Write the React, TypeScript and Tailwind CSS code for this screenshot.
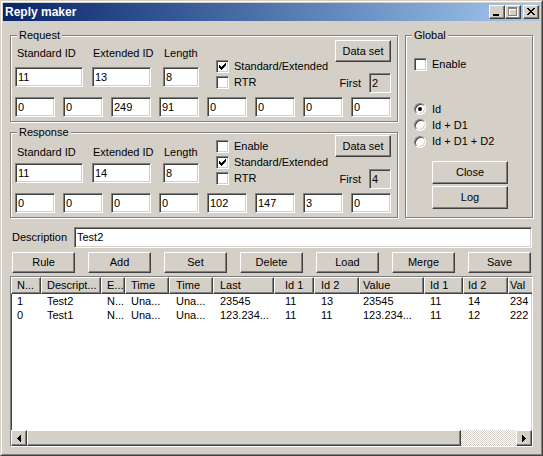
import React from "react";

const SUNKEN =
  "border border-t-[#808080] border-l-[#808080] border-r-white border-b-white shadow-[inset_1px_1px_0_#404040,inset_-1px_-1px_0_#d4d0c8]";
const RAISED =
  "border border-t-white border-l-white border-r-[#404040] border-b-[#404040] shadow-[inset_-1px_-1px_0_#808080]";
const ETCHED = "border border-[#808080] shadow-[inset_1px_1px_0_#ffffff,1px_1px_0_#ffffff]";

function Field({ v, w, h = "h-[20px]", bg = "bg-white" }: { v: string; w: string; h?: string; bg?: string }) {
  return (
    <div className={`${SUNKEN} ${bg} ${w} ${h} flex items-center pl-[2px] shrink-0 overflow-hidden whitespace-nowrap`}>
      {v}
    </div>
  );
}

function Btn({ children, cls }: { children: React.ReactNode; cls: string }) {
  return (
    <div className={`${RAISED} bg-[#d4d0c8] ${cls} flex items-center justify-center shrink-0 whitespace-nowrap`}>
      {children}
    </div>
  );
}

function CheckMark() {
  return (
    <svg width="7" height="7" viewBox="0 0 7 7" shapeRendering="crispEdges" fill="#000">
      <rect x="6" y="0" width="1" height="1" />
      <rect x="5" y="1" width="2" height="1" />
      <rect x="0" y="2" width="1" height="1" />
      <rect x="4" y="2" width="3" height="1" />
      <rect x="0" y="3" width="2" height="1" />
      <rect x="3" y="3" width="3" height="1" />
      <rect x="0" y="4" width="5" height="1" />
      <rect x="1" y="5" width="3" height="1" />
      <rect x="2" y="6" width="1" height="1" />
    </svg>
  );
}

function Check({ label, checked }: { label: string; checked?: boolean }) {
  return (
    <div className="flex items-center h-[13px]">
      <div className={`${SUNKEN} bg-white w-[13px] h-[13px] shrink-0 flex items-center justify-center`}>
        {checked && <CheckMark />}
      </div>
      <span className="ml-[5px] whitespace-nowrap">{label}</span>
    </div>
  );
}

function Radio({ label, on, h }: { label: string; on?: boolean; h: string }) {
  return (
    <div className={`flex items-center ${h}`}>
      <div className="w-[12px] h-[12px] rounded-full border border-t-[#808080] border-l-[#808080] border-r-white border-b-white shadow-[inset_1px_1px_0_#404040,inset_-1px_-1px_0_#d4d0c8] bg-white flex items-center justify-center shrink-0">
        {on && <div className="w-[4px] h-[4px] rounded-full bg-black" />}
      </div>
      <span className="ml-[6px] whitespace-nowrap">{label}</span>
    </div>
  );
}

function Group({ title, cls, children }: { title: string; cls: string; children: React.ReactNode }) {
  return (
    <div className={`relative ${ETCHED} ${cls}`}>
      <span className="absolute -top-[7px] left-[6px] px-[2px] bg-[#d4d0c8] leading-[13px] whitespace-nowrap">
        {title}
      </span>
      {children}
    </div>
  );
}

type SecProps = {
  title: string;
  h: string;
  pt: string;
  lblMt: string;
  lblMb: string;
  chkPt: string;
  firstMt: string;
  rowH: string;
  std: string;
  ext: string;
  len: string;
  checks: { label: string; checked?: boolean }[];
  first: string;
  data: string[];
};

function Section(p: SecProps) {
  const lbl = `${p.lblMt} ${p.lblMb} h-[13px] leading-[13px] whitespace-nowrap`;
  return (
    <Group title={p.title} cls={`w-[388px] ${p.h} pl-[4px] pr-[6px] ${p.pt}`}>
      <div className={`flex ${p.rowH}`}>
        <div className="w-[68px] flex flex-col shrink-0">
          <div className={`${lbl} pl-[2px]`}>Standard ID</div>
          <Field v={p.std} w="w-[68px]" />
        </div>
        <div className="ml-[9px] w-[59px] flex flex-col shrink-0">
          <div className={`${lbl} pl-[1px]`}>Extended ID</div>
          <Field v={p.ext} w="w-[59px]" />
        </div>
        <div className="ml-[12px] w-[36px] flex flex-col shrink-0">
          <div className={`${lbl} pl-[1px]`}>Length</div>
          <Field v={p.len} w="w-[36px]" />
        </div>
        <div className={`ml-[17px] flex-1 flex flex-col gap-[3px] ${p.chkPt}`}>
          {p.checks.map((c, i) => (
            <Check key={i} label={c.label} checked={c.checked} />
          ))}
        </div>
        <div className="w-[56px] flex flex-col items-end shrink-0">
          <Btn cls="w-[56px] h-[22px]">Data set</Btn>
          <div className={`${p.firstMt} flex items-center`}>
            <span className="mr-[8px]">First</span>
            <Field v={p.first} w="w-[22px]" bg="bg-[#d4d0c8]" />
          </div>
        </div>
      </div>
      <div className="flex gap-[8px]">
        {p.data.map((d, i) => (
          <Field key={i} v={d} w="w-[40px]" />
        ))}
      </div>
    </Group>
  );
}

const cols = [
  { w: "w-[30px]", pl: "pl-[5px]", h: "N..." },
  { w: "w-[60px]", pl: "pl-[5px]", h: "Descript..." },
  { w: "w-[24px]", pl: "pl-[5px]", h: "E..." },
  { w: "w-[44px]", pl: "pl-[5px]", h: "Time" },
  { w: "w-[44px]", pl: "pl-[6px]", h: "Time" },
  { w: "w-[61px]", pl: "pl-[6px]", h: "Last" },
  { w: "w-[40px]", pl: "pl-[10px]", h: "Id 1" },
  { w: "w-[45px]", pl: "pl-[6px]", h: "Id 2" },
  { w: "w-[65px]", pl: "pl-[3px]", h: "Value" },
  { w: "w-[39px]", pl: "pl-[5px]", h: "Id 1" },
  { w: "w-[45px]", pl: "pl-[4px]", h: "Id 2" },
  { w: "w-[60px]", pl: "pl-[1px]", h: "Val" },
];

const rows = [
  ["1", "Test2", "N...", "Una...", "Una...", "23545", "11", "13", "23545", "11", "14", "234"],
  ["0", "Test1", "N...", "Una...", "Una...", "123.234...", "11", "11", "123.234...", "11", "12", "222"],
];

function Arrow({ dir }: { dir: "l" | "r" }) {
  return (
    <div className={`${RAISED} bg-[#d4d0c8] w-[16px] h-[16px] flex items-center justify-center shrink-0`}>
      <svg width="4" height="7" viewBox="0 0 4 7" shapeRendering="crispEdges" fill="#000">
        {dir === "l" ? (
          <>
            <rect x="3" y="0" width="1" height="7" />
            <rect x="2" y="1" width="1" height="5" />
            <rect x="1" y="2" width="1" height="3" />
            <rect x="0" y="3" width="1" height="1" />
          </>
        ) : (
          <>
            <rect x="0" y="0" width="1" height="7" />
            <rect x="1" y="1" width="1" height="5" />
            <rect x="2" y="2" width="1" height="3" />
            <rect x="3" y="3" width="1" height="1" />
          </>
        )}
      </svg>
    </div>
  );
}

function CapBtn({ children }: { children: React.ReactNode }) {
  return (
    <div className={`${RAISED} bg-[#d4d0c8] w-[16px] h-[14px] shrink-0 relative`}>
      {children}
    </div>
  );
}

export default function App() {
  return (
    <div className="w-[543px] h-[456px] bg-[#d4d0c8] border border-t-[#d4d0c8] border-l-[#d4d0c8] border-r-[#404040] border-b-[#404040] text-[11px] leading-[13px] text-black font-['Liberation_Sans',Arial,sans-serif] overflow-hidden">
      <div className="w-full h-full border border-t-white border-l-white border-r-[#808080] border-b-[#808080] p-px flex flex-col">
        {/* Title bar */}
        <div className="h-[18px] shrink-0 bg-linear-to-r from-[#0a246a] to-[#a6caf0] flex items-center pl-[2px] pr-[1px]">
          <span className="text-white font-bold text-[12px] leading-[14px]">Reply maker</span>
          <div className="ml-auto flex items-center">
            <CapBtn>
              <svg width="14" height="12" viewBox="0 0 14 12" shapeRendering="crispEdges" className="absolute left-0 top-0">
                <rect x="3" y="8" width="6" height="2" fill="#000" />
              </svg>
            </CapBtn>
            <CapBtn>
              <svg width="14" height="12" viewBox="0 0 14 12" shapeRendering="crispEdges" className="absolute left-0 top-0">
                <g fill="#ffffff" transform="translate(1 1)">
                  <rect x="2" y="1" width="9" height="2" />
                  <rect x="2" y="1" width="1" height="9" />
                  <rect x="10" y="1" width="1" height="9" />
                  <rect x="2" y="9" width="9" height="1" />
                </g>
                <g fill="#808080">
                  <rect x="2" y="1" width="9" height="2" />
                  <rect x="2" y="1" width="1" height="9" />
                  <rect x="10" y="1" width="1" height="9" />
                  <rect x="2" y="9" width="9" height="1" />
                </g>
              </svg>
            </CapBtn>
            <div className="w-[2px]" />
            <CapBtn>
              <svg width="14" height="12" viewBox="0 0 14 12" shapeRendering="crispEdges" className="absolute left-0 top-0" fill="#000">
                <rect x="3" y="2" width="2" height="1" />
                <rect x="9" y="2" width="2" height="1" />
                <rect x="4" y="3" width="2" height="1" />
                <rect x="8" y="3" width="2" height="1" />
                <rect x="5" y="4" width="4" height="1" />
                <rect x="6" y="5" width="2" height="1" />
                <rect x="5" y="6" width="4" height="1" />
                <rect x="4" y="7" width="2" height="1" />
                <rect x="8" y="7" width="2" height="1" />
                <rect x="3" y="8" width="2" height="1" />
                <rect x="9" y="8" width="2" height="1" />
              </svg>
            </CapBtn>
          </div>
        </div>

        {/* Body */}
        <div className="flex-1 flex flex-col pl-[7px] pr-[7px] pt-[14px]">
          <div className="flex gap-[7px]">
            <div className="flex flex-col w-[388px]">
              <Section
                title="Request"
                h="h-[87px]"
                pt="pt-[4px]"
                lblMt="mt-[7px]"
                lblMb="mb-[7px]"
                chkPt="pt-[20px]"
                firstMt="mt-[11px]"
                rowH="h-[57px]"
                std="11"
                ext="13"
                len="8"
                checks={[
                  { label: "Standard/Extended", checked: true },
                  { label: "RTR" },
                ]}
                first="2"
                data={["0", "0", "249", "91", "0", "0", "0", "0"]}
              />
              <div className="h-[10px]" />
              <Section
                title="Response"
                h="h-[86px]"
                pt="pt-[2px]"
                lblMt="mt-[11px]"
                lblMb="mb-[4px]"
                chkPt="pt-[5px]"
                firstMt="mt-[12px]"
                rowH="h-[58px]"
                std="11"
                ext="14"
                len="8"
                checks={[
                  { label: "Enable" },
                  { label: "Standard/Extended", checked: true },
                  { label: "RTR" },
                ]}
                first="4"
                data={["0", "0", "0", "0", "102", "147", "3", "0"]}
              />
            </div>
            <Group title="Global" cls="w-[128px] h-[183px] pl-[8px] pt-[22px] flex flex-col">
              <Check label="Enable" />
              <div className="mt-[30px] flex flex-col">
                <Radio label="Id" on h="h-[16px]" />
                <Radio label="Id + D1" h="h-[16px]" />
                <Radio label="Id + D1 + D2" h="h-[17px]" />
              </div>
              <div className="ml-[18px] mt-[11px] flex flex-col gap-[2px]">
                <Btn cls="w-[76px] h-[23px]">Close</Btn>
                <Btn cls="w-[76px] h-[23px]">Log</Btn>
              </div>
            </Group>
          </div>

          {/* Description */}
          <div className="mt-[9px] h-[21px] flex items-center">
            <div className="w-[64px] pl-[2px] shrink-0">Description</div>
            <Field v="Test2" w="w-[458px]" h="h-[21px]" />
          </div>

          {/* Buttons */}
          <div className="mt-[4px] flex gap-[13px] pl-[2px]">
            {["Rule", "Add", "Set", "Delete", "Load", "Merge", "Save"].map((b) => (
              <Btn key={b} cls="w-[63px] h-[21px]">
                {b}
              </Btn>
            ))}
          </div>

          {/* List view */}
          <div className={`${SUNKEN} bg-white mt-[3px] w-[523px] h-[171px] flex flex-col overflow-hidden`}>
            <div className="flex h-[17px] shrink-0 overflow-hidden">
              {cols.map((c, i) => (
                <div
                  key={i}
                  className={`${RAISED} bg-[#d4d0c8] ${c.w} ${c.pl} h-[17px] shrink-0 flex items-center whitespace-nowrap overflow-hidden`}
                >
                  {c.h}
                </div>
              ))}
            </div>
            {rows.map((r, ri) => (
              <div key={ri} className="flex h-[14px] shrink-0 overflow-hidden">
                {r.map((v, ci) => (
                  <div
                    key={ci}
                    className={`${cols[ci].w} ${cols[ci].pl} border-l border-transparent shrink-0 flex items-center whitespace-nowrap overflow-hidden`}
                  >
                    {v}
                  </div>
                ))}
              </div>
            ))}
            <div className="flex-1" />
            <div className="flex h-[16px] shrink-0">
              <Arrow dir="l" />
              <div className={`${RAISED} bg-[#d4d0c8] w-[434px] h-[16px] shrink-0`} />
              <div className="flex-1 h-[16px] bg-[image:repeating-conic-gradient(#d4d0c8_0%_25%,#ffffff_0%_50%)] bg-[length:2px_2px]" />
              <Arrow dir="r" />
            </div>
          </div>
        </div>
      </div>
    </div>
  );
}
